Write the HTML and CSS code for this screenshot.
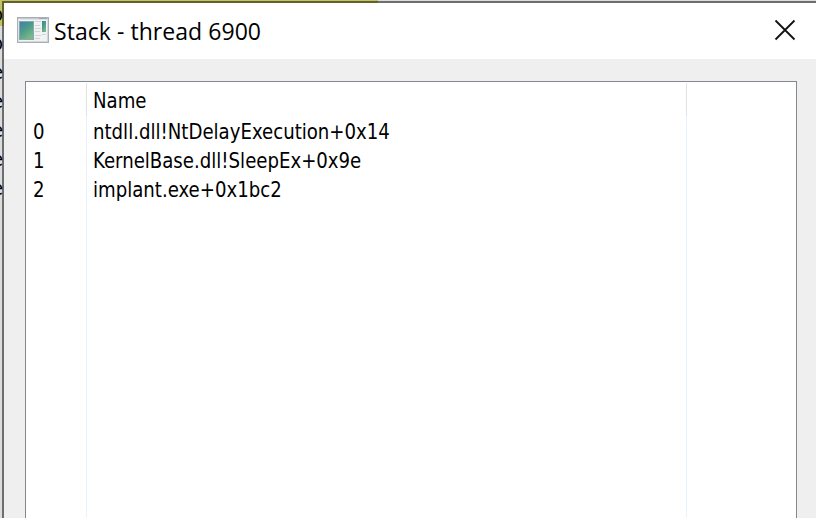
FILE: index.html
```html
<!DOCTYPE html>
<html lang="en">
<head>
<meta charset="utf-8">
<title>Stack - thread 6900</title>
<link rel="stylesheet" href="styles.css">
</head>
<body>
<div class="backdrop">
  <div class="selection"></div>
  <div class="behind"><span>o</span><span>o</span><span>e</span><span>e</span><span>e</span><span>e</span><span>e</span></div>
</div>
<main class="window">
  <header class="titlebar">
    <svg class="app-icon" width="32" height="26" viewBox="0 0 32 26">
      <defs>
        <linearGradient id="pane" x1="0" y1="0" x2=".6" y2="1"><stop offset="0" stop-color="#3e7fa5"/><stop offset=".5" stop-color="#4d9b8c"/><stop offset="1" stop-color="#7dba83"/></linearGradient>
        <linearGradient id="frame" x1="0" y1="0" x2="1" y2="1"><stop offset="0" stop-color="#e8eaec"/><stop offset="1" stop-color="#cfd3d6"/></linearGradient>
      </defs>
      <rect x=".5" y=".5" width="31" height="25" fill="url(#frame)" stroke="#a9afb5"/>
      <path d="M1 1.500h30" stroke="#c3c8cf"/>
      <path d="M22 1.500h8" stroke="#9ea8b3"/>
      <rect x="2" y="3" width="28" height="21" fill="#f1f2f3"/>
      <rect x="2.500" y="4.500" width="14" height="18" fill="url(#pane)" stroke="#86a8b0"/>
      <path d="M18 4.500h6M18 8.500h5M18 11.500h6M18 14.500h5M18 18.500h6M18 21.500h5M25 17.500h4" stroke="#d1d4d5"/>
      <rect x="25" y="4" width="4" height="11" fill="url(#pane)"/>
    </svg>
    <h1>Stack - thread 6900</h1>
    <svg class="close" width="22" height="22" viewBox="0 0 22 22"><path d="M1.500 1.500 20.500 20.500M20.500 1.500 1.500 20.500" stroke="#111" stroke-width="1.800"/></svg>
  </header>
  <section class="content">
    <div class="list">
      <div class="row head"><span></span><span><b>Name</b></span><span></span></div>
      <div class="row"><span><b>0</b></span><span><b>ntdll.dll!NtDelayExecution+0x14</b></span><span></span></div>
      <div class="row"><span><b>1</b></span><span><b>KernelBase.dll!SleepEx+0x9e</b></span><span></span></div>
      <div class="row"><span><b>2</b></span><span><b>implant.exe+0x1bc2</b></span><span></span></div>
      <div class="row rest"><span></span><span></span><span></span></div>
    </div>
  </section>
</main>
</body>
</html>
```
FILE: styles.css
```css
* { box-sizing: border-box; }
body { margin: 0; width: 816px; height: 518px; overflow: hidden; position: relative; background: #dcdcdc; }
.backdrop { height: 518px; overflow: hidden; }
.selection { width: 378px; height: 26px; background: #c3c365; }
.behind { position: absolute; left: -8px; top: 0; display: flex; flex-direction: column; font: 20px/29px "DejaVu Sans Condensed", sans-serif; color: #000; }
.window { position: absolute; left: 2px; top: 1px; width: 814px; height: 517px; border: solid rgba(0, 0, 0, .5); border-width: 2px 0 0 2px; background: #efefef; background-clip: padding-box; display: flex; flex-direction: column; }
.titlebar { flex: none; height: 56px; background: #fff; display: flex; align-items: center; padding: 0 20px 0 13px; }
.app-icon { flex: none; margin-top: -2px; }
h1 { margin: 0 auto 0 5px; font: 400 23px/30px "Open Sans", sans-serif; letter-spacing: .05px; color: #000; white-space: nowrap; }
.close { flex: none; margin-top: -2px; }
.content { flex: 1; display: flex; padding: 22px 19px 0 21px; }
.list { flex: 1; border: 1px solid #828790; border-bottom: 0; background: #fff; display: flex; flex-direction: column; padding-top: 1px; }
.row { display: grid; grid-template-columns: 61px 600px 1fr; height: 29px; font: 22px/31px "DejaVu Sans Condensed", sans-serif; color: #000; white-space: nowrap; flex: none; }
.row b { display: inline-block; font-weight: 400; transform: scaleX(.916); transform-origin: 0 50%; }
.row > span { padding-left: 7px; border-right: 1px solid #e8f2fc; }
.row > span + span { padding-left: 6px; }
.row > span:last-child { border: 0; }
.head { height: 33px; line-height: 36px; }
.head > span { border-color: #e2e2e2; }
.rest { height: auto; flex: 1; }
```
